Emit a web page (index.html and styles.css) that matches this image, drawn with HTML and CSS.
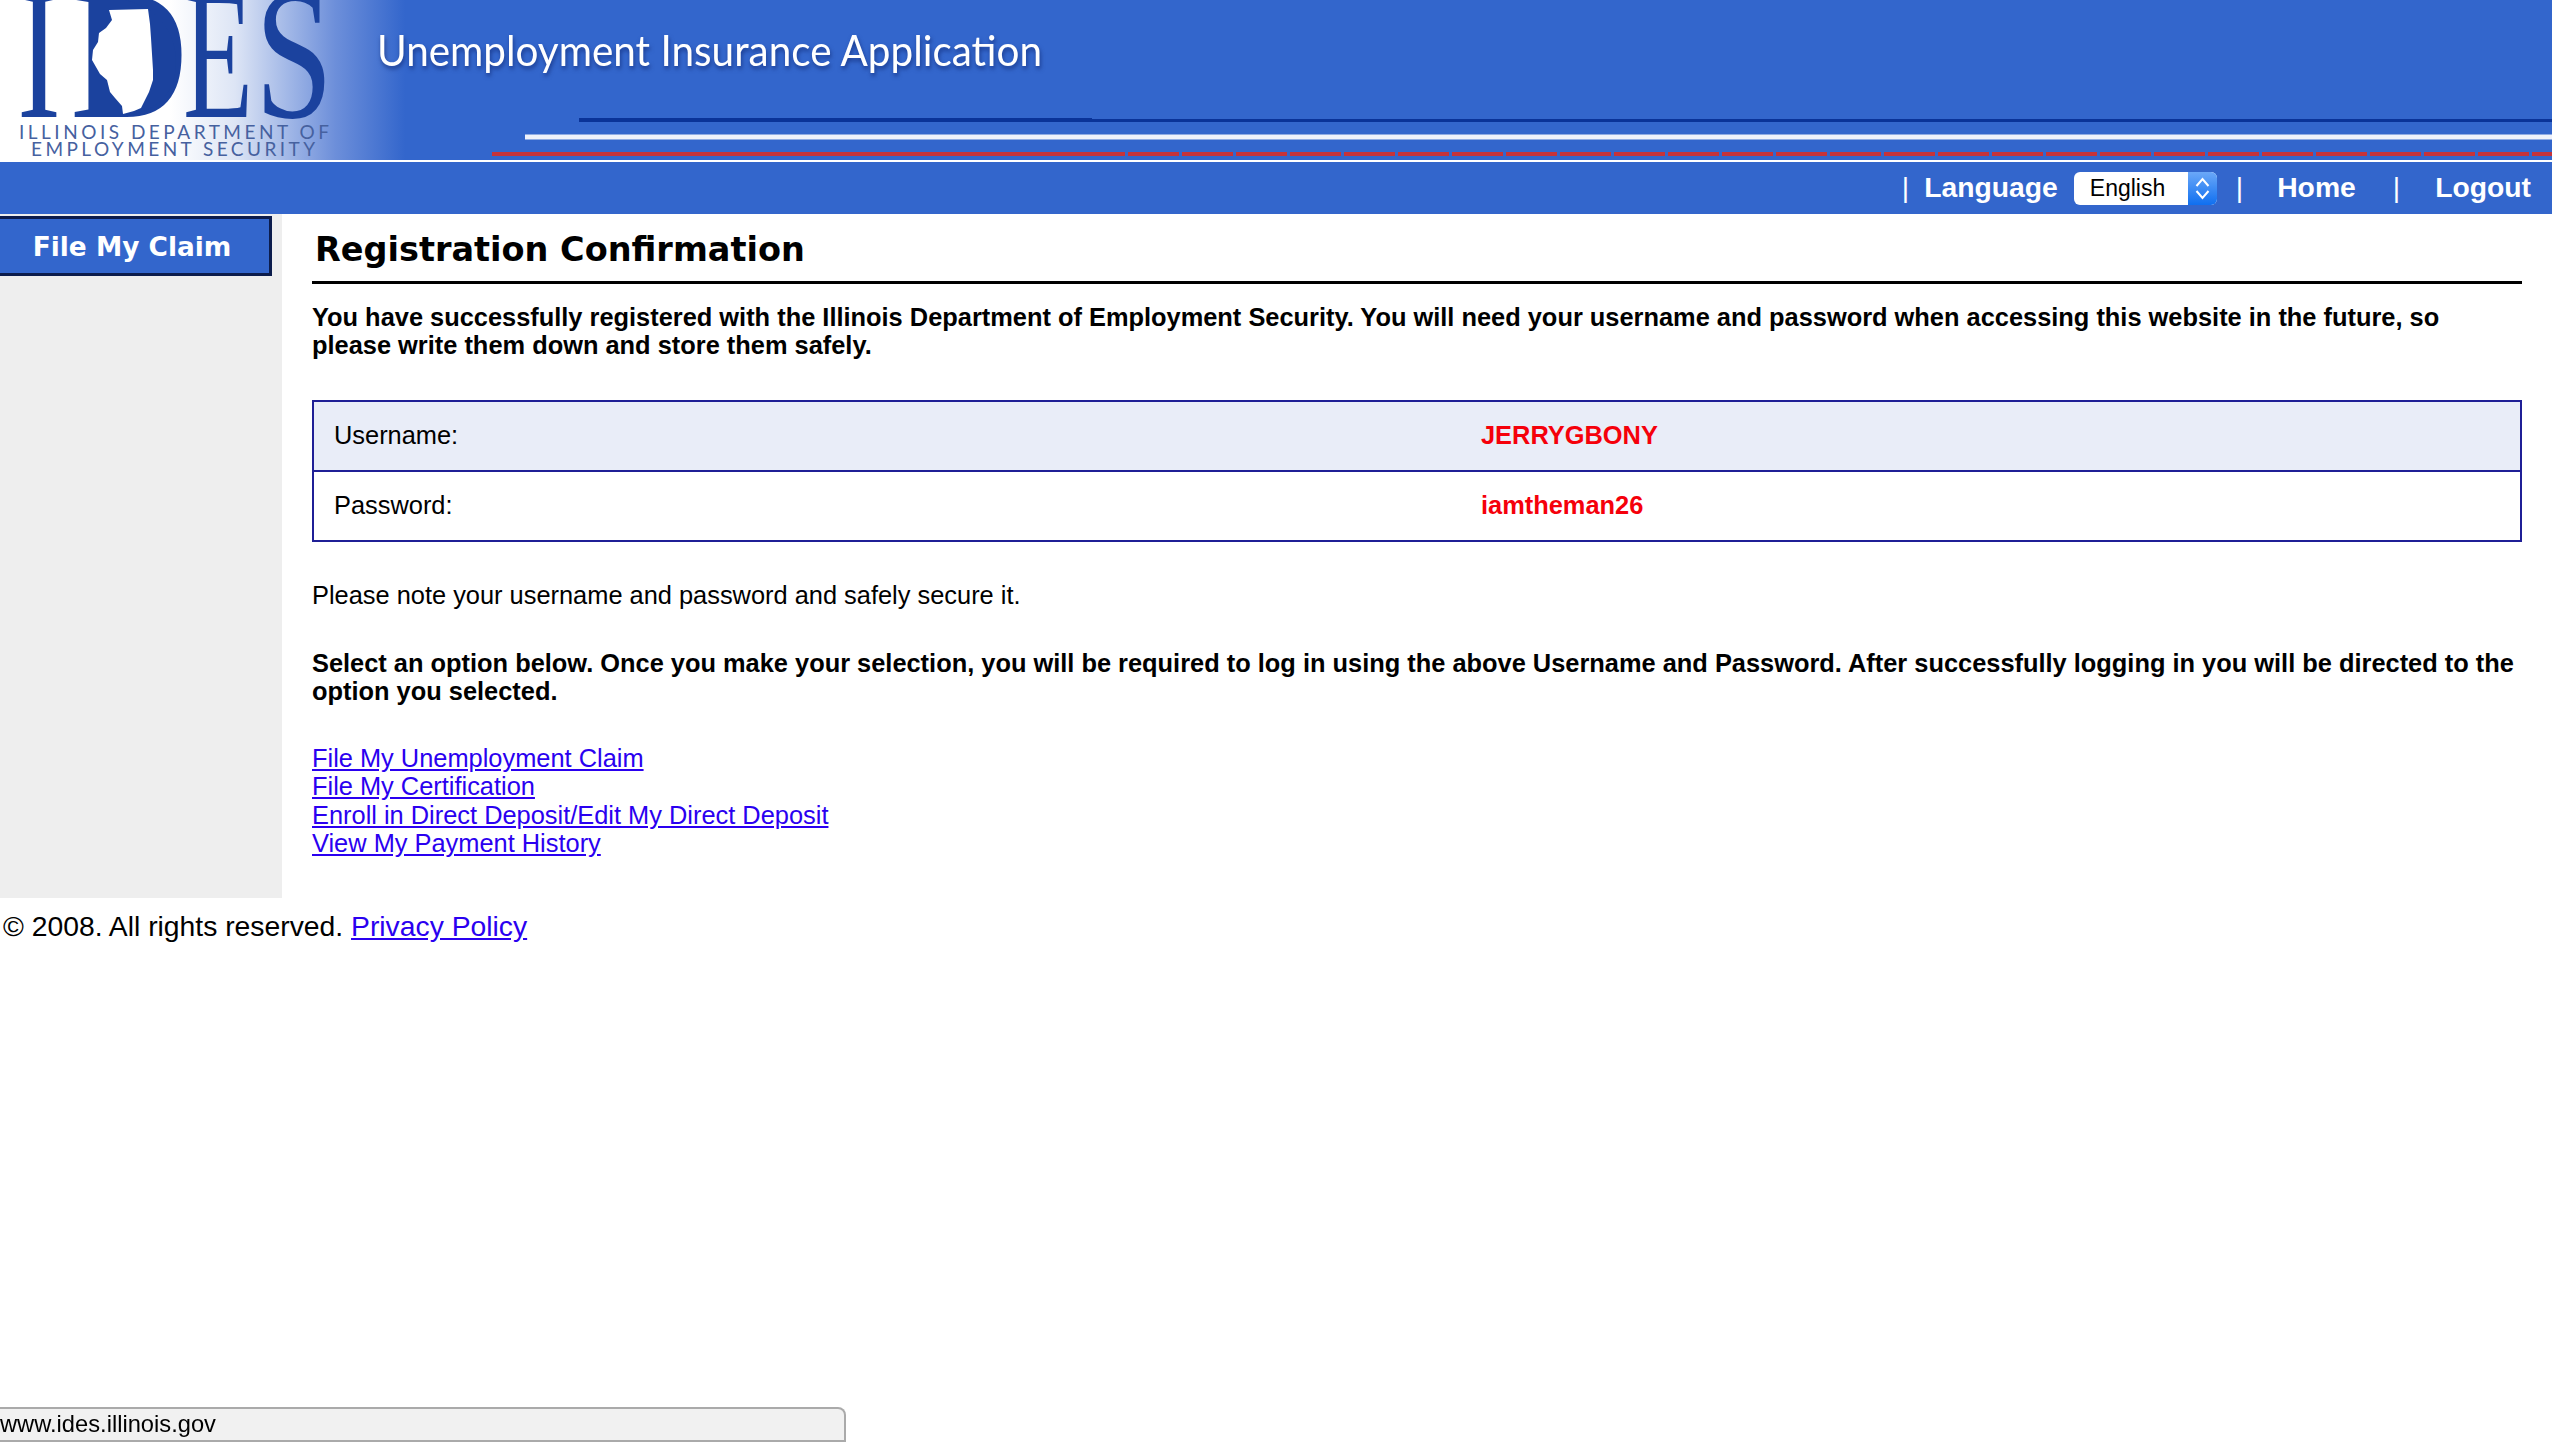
FILE: index.html
```html
<!DOCTYPE html>
<html>
<head>
<meta charset="utf-8">
<title>Registration Confirmation</title>
<link rel="stylesheet" href="styles.css">
</head>
<body>

<div class="banner">
  <svg class="banner_art" viewBox="0 0 2552 160" width="2552" height="160">
    <text class="logo_letter" x="17" y="117" textLength="44" lengthAdjust="spacingAndGlyphs">I</text>
    <text class="logo_letter" x="70" y="117" textLength="118" lengthAdjust="spacingAndGlyphs">D</text>
    <path class="logo_fill" d="M95 0 H125 C165 10 176 40 176 62 C176 90 160 112 125 115 H95 Z"/>
    <text class="logo_letter" x="183" y="117" textLength="70" lengthAdjust="spacingAndGlyphs">E</text>
    <text class="logo_letter" x="255" y="117" textLength="78" lengthAdjust="spacingAndGlyphs">S</text>
    <path class="logo_state" d="M109 10 L148 9 L150 24 L151 38 L153 70 L153 80 L149 92 L145 100 L141 108 L134 111 L123 114 L122 106 L115 98 L110 92 L107 80 L100 74 L92 60 L93 50 L98 42 L99 33 L106 28 L112 20 Z"/>
    <text class="logo_sub" x="19" y="139" textLength="310" lengthAdjust="spacing">ILLINOIS DEPARTMENT OF</text>
    <text class="logo_sub" x="31" y="156" textLength="284" lengthAdjust="spacing">EMPLOYMENT SECURITY</text>
    <text class="app_title" x="377" y="66" textLength="665" lengthAdjust="spacingAndGlyphs">Unemployment Insurance Application</text>
    <path class="line_navy" d="M579 120 H1092"/>
    <path class="line_navy_thin" d="M1092 120.500 H2552"/>
    <path class="line_white" d="M525 137 H2552"/>
    <path class="line_red" d="M492 154 H1125"/>
    <path class="line_red_dash" d="M1128 154 H2552"/>
  </svg>
</div>

<ul class="topmenu">
  <li class="sep">|</li>
  <li class="lang_label">Language</li>
  <li class="lang_item">
    <div class="lang_select">
      <span class="lang_value">English</span>
      <span class="lang_arrows">
        <svg viewBox="0 0 15 23" width="15" height="23"><path d="M1.500 9 L7.500 2 L13.500 9 M1.500 14 L7.500 21 L13.500 14"/></svg>
      </span>
    </div>
  </li>
  <li class="sep sep_home">|</li>
  <li><a href="#home">Home</a></li>
  <li class="sep sep_logout">|</li>
  <li><a href="#logout">Logout</a></li>
</ul>

<div class="main">
  <div class="sidemenu">
    <a href="#claim">File My Claim</a>
  </div>

  <div class="content">
    <div class="header">
      <h1>Registration Confirmation</h1>
    </div>
    <p class="bold intro">You have successfully registered with the Illinois Department of Employment Security. You will need your username and password when accessing this website in the future, so please write them down and store them safely.</p>

    <table class="creds">
      <tr class="odd">
        <td class="cred_label">Username:</td>
        <td class="cred_value">JERRYGBONY</td>
      </tr>
      <tr>
        <td class="cred_label">Password:</td>
        <td class="cred_value">iamtheman26</td>
      </tr>
    </table>

    <p class="note">Please note your username and password and safely secure it.</p>
    <p class="bold select_note">Select an option below. Once you make your selection, you will be required to log in using the above Username and Password. After successfully logging in you will be directed to the option you selected.</p>

    <ul class="options">
      <li><a href="#file">File My Unemployment Claim</a></li>
      <li><a href="#cert">File My Certification</a></li>
      <li><a href="#deposit">Enroll in Direct Deposit/Edit My Direct Deposit</a></li>
      <li><a href="#history">View My Payment History</a></li>
    </ul>
  </div>
</div>

<div class="footer">© 2008. All rights reserved. <a href="#privacy">Privacy Policy</a></div>

<div class="statusbar">www.ides.illinois.gov</div>

</body>
</html>
```

FILE: styles.css
```css
* {
    box-sizing: border-box;
}
html, body {
    height: 100%;
    overflow: hidden;
}
body {
    margin: 0;
    background-color: white;
    color: black;
    font-family: "Liberation Sans", Arial, sans-serif;
    font-size: 25.400px;
    line-height: 28px;
}
a {
    color: #2a00f0;
}

.banner {
    height: 160px;
    background: linear-gradient(to right, white 170px, #dde5f5 235px, #6d8fda 335px, #3366cc 405px);
}
.banner_art {
    display: block;
}
.logo_letter {
    font-family: "Liberation Serif", serif;
    font-size: 186px;
    fill: #1b429e;
}
.logo_fill {
    fill: #1b429e;
}
.logo_state {
    fill: white;
}
.logo_sub {
    font-family: "Lato", sans-serif;
    font-size: 19px;
    fill: #46619f;
}
.app_title {
    font-family: "Lato", sans-serif;
    font-size: 42px;
    fill: white;
    filter: drop-shadow(1px 3px 2px rgba(10, 30, 100, 0.6));
}
.line_navy {
    stroke: #0a3398;
    stroke-width: 4;
}
.line_navy_thin {
    stroke: #0a3398;
    stroke-width: 3;
}
.line_white {
    stroke: #eef1fa;
    stroke-width: 5;
}
.line_red {
    stroke: #c5333a;
    stroke-width: 4;
}
.line_red_dash {
    stroke: #c5333a;
    stroke-width: 4;
    stroke-dasharray: 51 3;
}

.topmenu {
    list-style-type: none;
    margin: 2px 0 0;
    padding: 0 21px 0 0;
    height: 52px;
    background-color: #3366cc;
    display: flex;
    justify-content: flex-end;
    align-items: center;
    color: white;
    font-size: 28.300px;
    font-weight: bold;
}
.topmenu li {
    padding-bottom: 2px;
}
.topmenu li.lang_item {
    padding-bottom: 0;
}
.topmenu a {
    color: white;
    text-decoration: none;
}
.sep {
    font-weight: normal;
    margin-right: 15px;
}
.lang_label {
    margin-right: 16px;
}
.sep_home {
    margin-left: 19px;
    margin-right: 34px;
}
.sep_logout {
    margin-left: 37px;
    margin-right: 35px;
}
.lang_select {
    width: 143px;
    height: 33px;
    display: flex;
    background-color: white;
    border-radius: 6px;
    overflow: hidden;
    color: black;
    font-size: 23px;
    font-weight: normal;
}
.lang_value {
    flex: 1;
    padding-left: 16px;
    line-height: 33px;
}
.lang_arrows {
    width: 29px;
    background: linear-gradient(to bottom, #6ba8f8, #0f6ff0);
    display: flex;
    align-items: center;
    justify-content: center;
}
.lang_arrows path {
    fill: none;
    stroke: white;
    stroke-width: 2;
}

.main {
    display: flex;
}
.sidemenu {
    width: 282px;
    height: 684px;
    padding-top: 2px;
    background-color: #eeeeee;
}
.sidemenu a {
    display: block;
    width: 272px;
    height: 60px;
    padding-right: 5px;
    border: 3px solid #0c1c4c;
    border-left: 0;
    background-color: #3366cc;
    color: white;
    font-family: "DejaVu Sans", sans-serif;
    font-size: 26.400px;
    font-weight: bold;
    line-height: 55px;
    text-align: center;
    text-decoration: none;
}
.content {
    flex: 1;
    padding: 0 30px;
}
.header {
    height: 70px;
    border-bottom: 3px solid black;
}
.header h1 {
    margin: 0;
    padding-left: 3px;
    font-family: "DejaVu Sans", sans-serif;
    font-size: 33.500px;
    line-height: 72px;
}
.bold {
    font-weight: bold;
}
p {
    margin: 0;
}
.intro {
    margin-top: 19px;
}
.creds {
    width: 100%;
    margin-top: 41px;
    border-collapse: collapse;
    border: 2px solid #1f1f96;
}
.creds td {
    height: 70px;
    padding: 0 0 2px 20px;
}
.creds tr + tr td {
    border-top: 2px solid #1f1f96;
}
.odd {
    background-color: #e9edf8;
}
.cred_label {
    width: 1148px;
}
.cred_value {
    color: #f5000b;
    font-weight: bold;
}
.note {
    margin-top: 39px;
}
.select_note {
    margin-top: 40px;
}
.options {
    list-style-type: none;
    margin: 39px 0 0;
    padding: 0;
    line-height: 28.400px;
}
.footer {
    margin-top: 11px;
    padding-left: 3px;
    font-size: 28.300px;
    line-height: 34px;
}
.statusbar {
    position: fixed;
    left: 0;
    bottom: 0;
    width: 846px;
    height: 35px;
    background-color: #f1f1f1;
    border: 2px solid #aaaaaa;
    border-left: 0;
    border-top-right-radius: 8px;
    font-size: 23.700px;
    line-height: 31px;
}
```
